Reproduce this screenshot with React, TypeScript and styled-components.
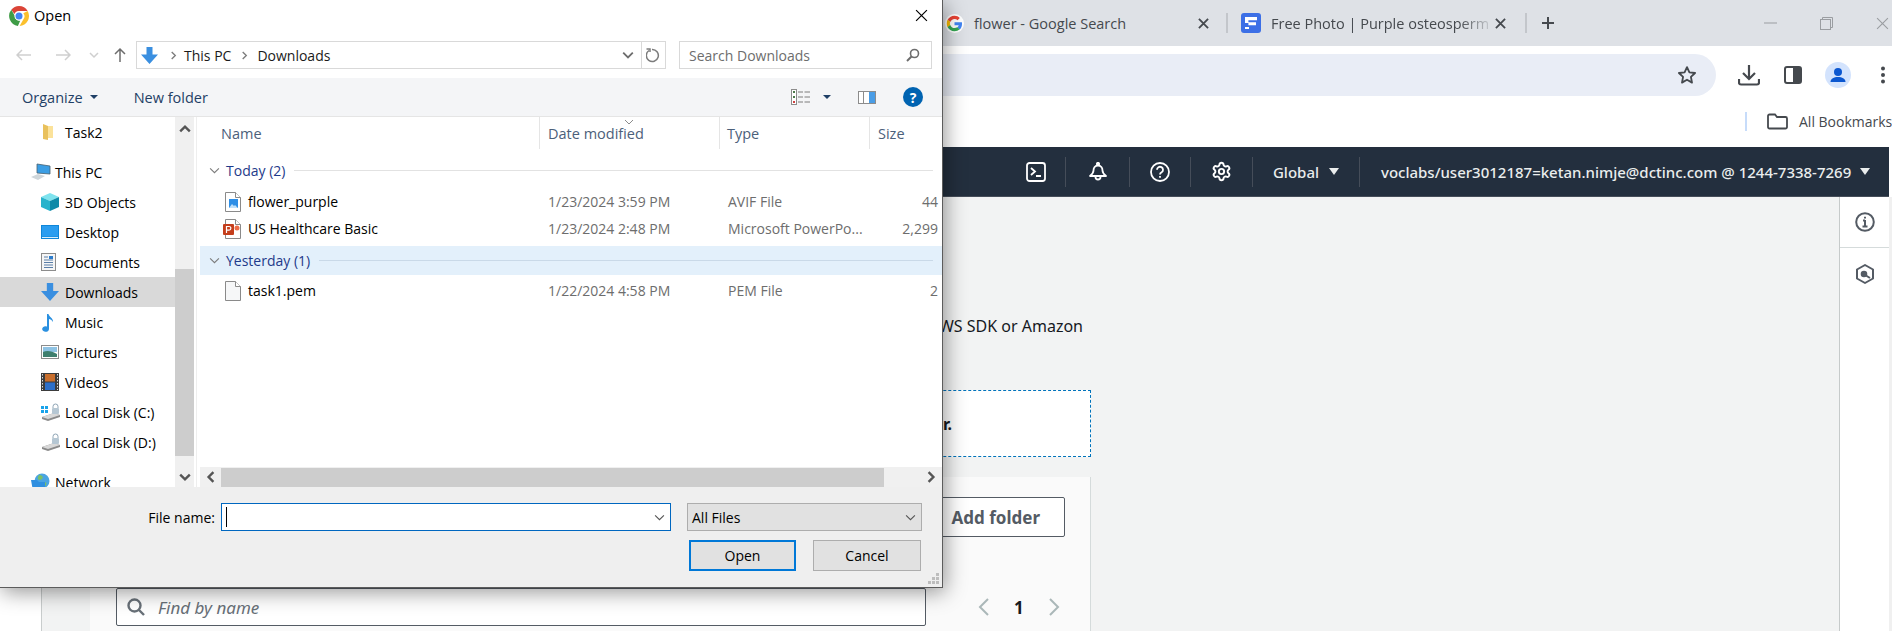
import React from 'react'
import styled, { createGlobalStyle } from 'styled-components'
import { Settings } from 'lucide-react'

const GlobalStyle = createGlobalStyle`
  html, body { margin: 0; padding: 0; background: #fff; }
  * { box-sizing: border-box; }
`

const WIN_FONT = `"Open Sans", "Noto Sans", sans-serif`
const AWS_FONT = `"Noto Sans", "Open Sans", sans-serif`

const Screen = styled.div`
  position: relative;
  width: 1892px;
  height: 631px;
  overflow: hidden;
  font-family: ${WIN_FONT};
`

/* ---------- browser behind the dialog ---------- */

const Browser = styled.div`
  display: flex;
  flex-direction: column;
  height: 100%;
`

const TabStrip = styled.div`
  display: flex;
  align-items: center;
  height: 46px;
  padding-left: 945px;
  background: #dee1e6;
  color: #45494e;
`

const Tab = styled.div<{ $w: number; $pl: number; $pr: number }>`
  display: flex;
  align-items: center;
  width: ${(p) => p.$w}px;
  padding: 0 ${(p) => p.$pr}px 0 ${(p) => p.$pl}px;
`

const TabTitle = styled.span<{ $fade?: boolean }>`
  flex: 1;
  margin-left: 10px;
  font-size: 14.5px;
  white-space: nowrap;
  ${(p) => p.$fade && `mask-image: linear-gradient(to right, #000 84%, transparent 100%);`}
`

const TabDivider = styled.span`
  width: 2px;
  height: 20px;
  background: #c3c6cb;
`

const NewTab = styled.span`
  display: flex;
  margin-left: 14px;
`

const WinControls = styled.div`
  display: flex;
  align-items: center;
  margin-left: auto;
  padding-right: 3px;
  gap: 43px;
`

const Toolbar = styled.div`
  display: flex;
  height: 50px;
  padding-top: 8px;
  background: #fff;
`

const Omnibox = styled.div`
  flex: 1;
  display: flex;
  align-items: center;
  justify-content: flex-end;
  padding-right: 19px;
  background: #e9edf6;
  border-radius: 0 21px 21px 0;
`

const ToolActions = styled.div`
  display: flex;
  align-items: center;
  width: 176px;
`

const ToolAction = styled.span<{ $ml: number }>`
  display: flex;
  margin-left: ${(p) => p.$ml}px;
`

const BookmarkBar = styled.div`
  display: flex;
  align-items: center;
  justify-content: flex-end;
  height: 51px;
  background: #fff;
  color: #45494e;
  font-size: 14px;
  white-space: nowrap;
`

const BookmarkSep = styled.span`
  width: 2px;
  height: 19px;
  margin-right: 20px;
  background: #c7dcfa;
`

const BookmarkLabel = styled.span`
  width: 93px;
  margin-left: 11px;
`

const AwsNav = styled.div`
  display: flex;
  align-items: center;
  justify-content: flex-end;
  height: 50px;
  margin-right: 3px;
  background: #232f3e;
  border-bottom: 1px solid #454d59;
  color: #eaeded;
  font-family: ${AWS_FONT};
  font-size: 15px;
  font-weight: 500;
`

const NavCell = styled.div<{ $w: number; $last?: boolean }>`
  display: flex;
  align-items: center;
  justify-content: ${(p) => (p.$last ? 'flex-start' : 'center')};
  gap: 8px;
  width: ${(p) => p.$w}px;
  height: 30px;
  padding-left: ${(p) => (p.$last ? 21 : 0)}px;
  white-space: nowrap;
  border-right: ${(p) => (p.$last ? 'none' : '1px solid #454d59')};
`

const Caret = styled.span<{ $ml?: number }>`
  width: 0;
  height: 0;
  margin-left: ${(p) => p.$ml ?? 0}px;
  border-left: 5px solid transparent;
  border-right: 5px solid transparent;
  border-top: 7px solid #eaeded;
`

const PageBody = styled.div`
  flex: 1;
  display: flex;
  min-height: 0;
  background: #f2f3f3;
  font-family: ${AWS_FONT};
`

const LeftRail = styled.div`
  width: 42px;
  background: #fff;
  border-right: 1px solid #c9cdcd;
`

const Content = styled.div`
  flex: 1;
  min-width: 0;
  padding: 117px 0 0 48px;
`

const Lead = styled.p`
  width: 993px;
  margin: 0 0 52px;
  font-size: 16px;
  line-height: 24px;
  color: #16191f;
  text-align: right;
  white-space: nowrap;
`

const DropZone = styled.div`
  display: flex;
  align-items: center;
  justify-content: flex-end;
  width: 1001px;
  height: 67px;
  padding-right: 138px;
  background: #fff;
  border: 1px dashed #0073bb;
  font-size: 16px;
  font-weight: 700;
  color: #16191f;
  white-space: nowrap;
`

const Card = styled.div`
  width: 1001px;
  height: 200px;
  margin-top: 20px;
  padding: 20px 25px 0 26px;
  background: #fafafa;
  border-right: 1px solid #d5dbdb;
`

const CardActions = styled.div`
  display: flex;
  justify-content: flex-end;
`

const OutlineButton = styled.button`
  width: 142px;
  height: 40px;
  padding: 0 24px 0 0;
  text-align: right;
  background: #fff;
  border: 1px solid #545b64;
  border-radius: 2px;
  font-family: ${AWS_FONT};
  font-size: 17px;
  font-weight: 700;
  color: #545b64;
`

const FindRow = styled.div`
  display: flex;
  align-items: center;
  margin-top: 51px;
`

const FindInput = styled.div`
  display: flex;
  align-items: center;
  gap: 13px;
  width: 810px;
  height: 38px;
  padding-left: 10px;
  background: #fff;
  border: 1px solid #545b64;
  border-radius: 2px;
  color: #687078;
  font-size: 17px;
  font-style: italic;
`

const Pager = styled.div`
  display: flex;
  align-items: center;
  margin-left: 51px;
  gap: 24px;
  font-size: 17px;
  font-weight: 700;
  color: #16191f;
`

const SidePanel = styled.div`
  width: 53px;
  background: #fff;
  border-left: 1px solid #c6caca;
  border-right: 3px solid #f0f0f0;
`

const SideItem = styled.div<{ $h: number }>`
  display: flex;
  align-items: center;
  justify-content: center;
  height: ${(p) => p.$h}px;
  border-bottom: 1px solid #d5dbdb;
  &:last-child { border-bottom: none; }
`

/* ---------- file dialog ---------- */

const Dialog = styled.div`
  position: absolute;
  left: 0;
  top: 0;
  display: flex;
  flex-direction: column;
  width: 943px;
  height: 588px;
  background: #fff;
  border-right: 1px solid #5c5c5c;
  border-bottom: 1px solid #5c5c5c;
  box-shadow: 2px 4px 20px rgba(0, 0, 0, 0.42);
  color: #000;
  font-size: 14px;
`

const TitleBar = styled.div`
  display: flex;
  align-items: center;
  gap: 5px;
  height: 31px;
  padding: 0 14px 0 9px;
  font-size: 14.5px;
`

const CloseBtn = styled.span`
  display: flex;
  margin-left: auto;
`

const AddressRow = styled.div`
  display: flex;
  align-items: center;
  height: 28px;
  margin-top: 10px;
  padding-left: 14px;
`

const NavBtn = styled.span<{ $ml: number }>`
  display: flex;
  margin-left: ${(p) => p.$ml}px;
`

const BoxField = styled.div<{ $w: number; $ml: number }>`
  display: flex;
  align-items: center;
  width: ${(p) => p.$w}px;
  height: 28px;
  margin-left: ${(p) => p.$ml}px;
  border: 1px solid #d9d9d9;
`

const Crumb = styled.span<{ $ml?: number }>`
  display: flex;
  margin-left: ${(p) => p.$ml ?? 0}px;
  color: #1a1a1a;
  white-space: nowrap;
`

const CrumbSpacer = styled.span`
  flex: 1;
`

const RefreshBox = styled.span`
  display: flex;
  align-items: center;
  justify-content: center;
  width: 24px;
  height: 100%;
  margin-left: 7px;
  border-left: 1px solid #d9d9d9;
`

const SearchPlaceholder = styled.span`
  flex: 1;
  padding-left: 9px;
  color: #6d6d6d;
  white-space: nowrap;
`

const CommandBar = styled.div`
  display: flex;
  align-items: center;
  height: 39px;
  margin-top: 9px;
  padding: 0 19px 0 22px;
  background: #f4f5f7;
  border-bottom: 1px solid #e5e5e5;
  color: #1f3f66;
  font-size: 14.5px;
`

const CommandBtn = styled.span<{ $ml?: number }>`
  display: flex;
  align-items: center;
  margin-left: ${(p) => p.$ml ?? 0}px;
`

const SmallCaret = styled.span<{ $ml: number }>`
  width: 0;
  height: 0;
  margin-left: ${(p) => p.$ml}px;
  border-left: 4px solid transparent;
  border-right: 4px solid transparent;
  border-top: 4px solid #1f3f66;
`

const CommandRight = styled.div`
  display: flex;
  align-items: center;
  margin-left: auto;
`

const HelpDot = styled.span`
  display: flex;
  align-items: center;
  justify-content: center;
  width: 20px;
  height: 20px;
  margin-left: 27px;
  border-radius: 50%;
  background: #0063b1;
  color: #fff;
  font-size: 14px;
  font-weight: 700;
`

const Explorer = styled.div`
  flex: 1;
  display: flex;
  min-height: 0;
`

const NavPane = styled.div`
  width: 175px;
  overflow: hidden;
`

const NavRow = styled.div<{ $indent: number; $active?: boolean; $mt?: number }>`
  display: flex;
  align-items: center;
  height: 30px;
  margin-top: ${(p) => p.$mt ?? 0}px;
  padding-left: ${(p) => p.$indent}px;
  background: ${(p) => (p.$active ? '#d9d9d9' : 'transparent')};
  white-space: nowrap;
`

const NavIcon = styled.span`
  display: flex;
  align-items: center;
  width: 24px;
`

const VScroll = styled.div`
  display: flex;
  flex-direction: column;
  width: 19px;
  background: #f0f0f0;
`

const ScrollArrow = styled.span<{ $h: number }>`
  display: flex;
  align-items: center;
  justify-content: center;
  flex: none;
  height: ${(p) => p.$h}px;
`

const VThumb = styled.div`
  height: 187px;
  margin-top: auto;
  margin-bottom: 11px;
  background: #cdcdcd;
`

const PaneGap = styled.div`
  width: 6px;
  padding-left: 2px;
  &::before {
    content: '';
    display: block;
    width: 1px;
    height: 100%;
    background: #eeeeee;
  }
`

const FilePane = styled.div`
  flex: 1;
  display: flex;
  flex-direction: column;
  min-width: 0;
`

const COLUMNS = '340px 180px 150px 72px'

const HeaderRow = styled.div`
  position: relative;
  display: grid;
  grid-template-columns: ${COLUMNS};
  height: 32px;
  color: #4c607a;
  font-size: 14.5px;
`

const HeaderCell = styled.div<{ $pl: number; $line?: boolean }>`
  display: flex;
  align-items: center;
  padding-left: ${(p) => p.$pl}px;
  border-right: ${(p) => (p.$line ? '1px solid #e5e5e5' : 'none')};
`

const SortMark = styled.span`
  position: absolute;
  left: 424px;
  top: 0;
  display: flex;
`

const GroupRow = styled.div<{ $selected?: boolean }>`
  display: flex;
  align-items: center;
  height: 29px;
  padding: 0 9px;
  background: ${(p) => (p.$selected ? '#e3f0fb' : 'transparent')};
  color: #1e3a8a;
`

const GroupLabel = styled.span`
  margin-left: 6px;
  white-space: nowrap;
`

const GroupLine = styled.span<{ $selected?: boolean }>`
  flex: 1;
  height: 1px;
  margin-left: 9px;
  background: ${(p) => (p.$selected ? '#c9d9e8' : '#e2e2e2')};
`

const Rows = styled.div<{ $mt: number; $mb: number }>`
  margin: ${(p) => p.$mt}px 0 ${(p) => p.$mb}px;
`

const FileRow = styled.div`
  display: grid;
  grid-template-columns: ${COLUMNS};
  align-items: center;
  height: 27px;
  color: #6d6d6d;
  white-space: nowrap;
`

const NameCell = styled.div`
  display: flex;
  align-items: center;
  color: #000;
`

const FileIcon = styled.span`
  display: flex;
  justify-content: flex-end;
  width: 48px;
  padding-right: 5px;
`

const DateCell = styled.div`
  padding-left: 8px;
`

const TypeCell = styled.div`
  padding-left: 8px;
  overflow: hidden;
`

const SizeCell = styled.div`
  text-align: right;
  padding-right: 4px;
`

const ListArea = styled.div`
  flex: 1;
  min-height: 0;
  overflow: hidden;
  padding-top: 7px;
`

const HScroll = styled.div`
  display: flex;
  align-items: center;
  height: 20px;
  background: #f0f0f0;
`

const HArrow = styled.span<{ $w: number }>`
  display: flex;
  justify-content: center;
  width: ${(p) => p.$w}px;
`

const HThumb = styled.div`
  width: 663px;
  height: 19px;
  background: #cdcdcd;
`

const Footer = styled.div`
  position: relative;
  display: flex;
  flex-direction: column;
  height: 100px;
  padding: 16px 20px 0 0;
  background: #efefef;
`

const FormRow = styled.div<{ $mt?: number; $mr?: number }>`
  display: flex;
  align-items: center;
  justify-content: flex-end;
  margin-top: ${(p) => p.$mt ?? 0}px;
  margin-right: ${(p) => p.$mr ?? 0}px;
`

const FileLabel = styled.span`
  margin-right: 6px;
`

const NameInput = styled.div`
  display: flex;
  align-items: center;
  justify-content: space-between;
  width: 450px;
  height: 28px;
  padding: 0 5px 0 4px;
  background: #fff;
  border: 1px solid #0067c0;
`

const TextCaret = styled.span`
  width: 1px;
  height: 20px;
  background: #000;
`

const TypeSelect = styled.div`
  display: flex;
  align-items: center;
  justify-content: space-between;
  width: 235px;
  height: 28px;
  margin-left: 16px;
  padding: 0 5px 0 4px;
  background: #e1e1e1;
  border: 1px solid #adadad;
`

const DialogButton = styled.button<{ $primary?: boolean; $w: number }>`
  width: ${(p) => p.$w}px;
  height: 31px;
  margin-left: 17px;
  padding: 0;
  background: #e1e1e1;
  border: ${(p) => (p.$primary ? '2px solid #0078d7' : '1px solid #adadad')};
  font-family: ${WIN_FONT};
  font-size: 14px;
  color: #000;
`

const Grip = styled.span`
  position: absolute;
  right: 2px;
  bottom: 2px;
  display: flex;
`

/* ---------- drawings ---------- */

const ChromeLogo = () => (
  <svg width="20" height="20" viewBox="0 0 20 20">
    <path d="M10 0a10 10 0 0 1 8.66 5H10a5 5 0 0 0-4.6 3L2.3 3.8A10 10 0 0 1 10 0z" fill="#db4437" />
    <path d="M18.66 5A10 10 0 0 1 10.6 20l3.7-6.5A5 5 0 0 0 14.3 7.2z" fill="#fbc02d" />
    <path d="M2.3 3.8 5.6 9.4a5 5 0 0 0 5.6 5.4L8.9 19.9A10 10 0 0 1 2.3 3.8z" fill="#3f9c46" />
    <circle cx="10" cy="10" r="4.4" fill="#fff" />
    <circle cx="10" cy="10" r="3.5" fill="#4285f4" />
  </svg>
)

const GoogleLogo = () => (
  <svg width="19" height="19" viewBox="0 0 48 48">
    <circle cx="24" cy="24" r="24" fill="#fff" />
    <path fill="#ea4335" d="M24 12.5c3 0 5.6 1 7.7 3l5.7-5.7C33.9 6.5 29.4 4.5 24 4.5c-7.7 0-14.3 4.4-17.5 10.8l6.7 5.2C14.8 15.8 19 12.5 24 12.5z" />
    <path fill="#4285f4" d="M43 24.5c0-1.3-.1-2.6-.3-3.9H24v7.700h10.700c-.5 2.500-1.900 4.600-4 6l6.500 5C41 35.800 43 30.600 43 24.500z" />
    <path fill="#fbbc05" d="M13.200 28.500c-.5-1.400-.8-2.900-.8-4.500s.3-3.100.8-4.500l-6.700-5.200C5.200 17.300 4.500 20.500 4.500 24s.7 6.700 2 9.700z" />
    <path fill="#34a853" d="M24 43.500c5.300 0 9.700-1.700 13.200-4.800l-6.500-5c-1.800 1.200-4.100 1.900-6.700 1.900-5 0-9.200-3.300-10.800-7.900l-6.700 5.200C9.700 39.100 16.300 43.500 24 43.500z" />
  </svg>
)

const FreepikLogo = () => (
  <svg width="20" height="20" viewBox="0 0 20 20">
    <rect width="20" height="20" rx="3" fill="#3c6fe6" />
    <path d="M4 4h12v3.200H7.400v2H15v3H7.400V10H4zM4 14h4v2H4z" fill="#fff" />
  </svg>
)

const Cross = ({ size = 12, color = '#45494e', width = 2 }: { size?: number; color?: string; width?: number }) => (
  <svg width={size} height={size} viewBox="0 0 12 12">
    <path d="M1 1l10 10M11 1 1 11" stroke={color} strokeWidth={width} fill="none" />
  </svg>
)

const Chevron = ({ dir, size = 10, color = '#555', width = 1.5 }: { dir: 'up' | 'down' | 'left' | 'right'; size?: number; color?: string; width?: number }) => {
  const d = {
    up: 'M1 7l4-4 4 4',
    down: 'M1 3l4 4 4-4',
    left: 'M7 1 3 5l4 4',
    right: 'M3 1l4 4-4 4',
  }[dir]
  return (
    <svg width={size} height={size} viewBox="0 0 10 10">
      <path d={d} stroke={color} strokeWidth={width} fill="none" />
    </svg>
  )
}

const Arrow = ({ dir, color }: { dir: 'left' | 'right' | 'up'; color: string }) => {
  if (dir === 'up') {
    return (
      <svg width="12" height="16" viewBox="0 0 12 16">
        <path d="M6 15V2M1 7l5-5 5 5" stroke={color} strokeWidth="1.5" fill="none" />
      </svg>
    )
  }
  const d = dir === 'left' ? 'M15 6H1M6 1 1 6l5 5' : 'M1 6h14M10 1l5 5-5 5'
  return (
    <svg width="16" height="12" viewBox="0 0 16 12">
      <path d={d} stroke={color} strokeWidth="1.5" fill="none" />
    </svg>
  )
}

const BlueDown = ({ size = 17 }: { size?: number }) => (
  <svg width={size} height={size} viewBox="0 0 17 17">
    <path d="M5.5 0h6v7.500H17L8.500 17 0 7.500h5.500z" fill="#3a8fe0" />
  </svg>
)

const FolderYellow = () => (
  <svg width="18" height="18" viewBox="0 0 18 18">
    <path d="M2 1 7 3v14l-5-1z" fill="#e9c15c" />
    <path d="M7 3h5v12H7z" fill="#fbe29a" />
  </svg>
)

const Monitor = () => (
  <svg width="20" height="18" viewBox="0 0 20 18">
    <path d="M6 1l13 2v8L6 10z" fill="#3c9ee4" stroke="#46606f" strokeWidth=".8" />
    <path d="M0 14l7-3 7 2-7 4z" fill="#cfd6da" />
  </svg>
)

const Cube = () => (
  <svg width="18" height="18" viewBox="0 0 18 18">
    <path d="M9 0l9 4-9 4-9-4z" fill="#7fe3ee" />
    <path d="M0 4l9 4v10l-9-4z" fill="#27b3cc" />
    <path d="M18 4 9 8v10l9-4z" fill="#0f8aa8" />
  </svg>
)

const DesktopIcon = () => (
  <svg width="18" height="14" viewBox="0 0 18 14">
    <rect width="18" height="14" fill="#0f86d8" />
    <rect x="1" y="1" width="16" height="10.5" fill="#2a9df0" />
    <rect x="1" y="12" width="16" height="1" fill="#d6ecfb" />
  </svg>
)

const DocIcon = () => (
  <svg width="15" height="18" viewBox="0 0 15 18">
    <rect x=".5" y=".5" width="14" height="17" fill="#f6f6f6" stroke="#8c8c8c" />
    <path d="M3 4h4M3 7h9M3 9.500h9M3 12h9M3 14.500h9" stroke="#5a7ea8" />
    <rect x="8" y="3" width="4" height="3" fill="#2b7ccc" />
  </svg>
)

const MusicIcon = () => (
  <svg width="14" height="19" viewBox="0 0 14 19">
    <path d="M6 1h1.500c.5 3 5 4 4.500 8-1-2-3-3-4-3v10a3.400 2.800 0 1 1-2-2.500z" fill="#2a90e0" />
  </svg>
)

const PictureIcon = () => (
  <svg width="18" height="14" viewBox="0 0 18 14">
    <rect x=".5" y=".5" width="17" height="13" fill="#fff" stroke="#8c8c8c" />
    <rect x="2" y="2" width="14" height="5" fill="#8fc3e4" />
    <path d="M2 7c4-2 9-1 14 2v3H2z" fill="#3f7f6e" />
  </svg>
)

const FilmIcon = () => (
  <svg width="18" height="18" viewBox="0 0 18 18">
    <rect width="18" height="18" fill="#3c3c3c" />
    <rect x="4" y="1" width="10" height="7.5" fill="#c96f2d" />
    <rect x="4" y="9.5" width="10" height="7.5" fill="#2d6fc9" />
    <path d="M1.500 1v16M16.500 1v16" stroke="#ddd" strokeDasharray="1.5 1.5" />
  </svg>
)

const DiskIcon = ({ windows }: { windows?: boolean }) => (
  <svg width="20" height="18" viewBox="0 0 20 18">
    <path d="M1 14l12-4 6 2v2L7 18l-6-2z" fill="#8a8a8a" />
    <path d="M1 14l12-4 6 2-12 4z" fill="#d8d8d8" />
    <path d="M12 5V3.500a2.500 2.500 0 0 1 5 0V5" stroke="#8fa5b5" fill="none" />
    <rect x="11" y="5" width="7" height="6" rx="1" fill="#b6c7d3" />
    {windows && <path d="M0 3h3v3H0zM4 3h3v3H4zM0 7h3v3H0zM4 7h3v3H4z" fill="#19a3ea" />}
  </svg>
)

const GlobeIcon = () => (
  <svg width="19" height="18" viewBox="0 0 19 18">
    <circle cx="11" cy="8" r="7.5" fill="#4aa4e2" />
    <path d="M8 2c3 0 5 2 3 4S6 7 7 4zM13 9c2 0 3 1 2 3s-4 2-3 0z" fill="#7ac068" />
    <path d="M0 7h6l2 2h6v9H2z" fill="#2f8fe0" />
  </svg>
)

const PageOutline = ({ children, fill = '#fff' }: { children?: React.ReactNode; fill?: string }) => (
  <svg width="20" height="20" viewBox="0 0 20 20">
    <path d="M2.500 .5h10l5 5v14h-15z" fill={fill} stroke="#8a8a8a" />
    <path d="M12.500 .5v5h5" fill="#fff" stroke="#8a8a8a" />
    {children}
  </svg>
)

const ViewsIcon = () => (
  <svg width="19" height="16" viewBox="0 0 19 16">
    <rect x=".5" y=".5" width="5" height="15" fill="#fff" stroke="#8c8c8c" />
    <rect x="2" y="2" width="2" height="2" fill="#4a7a4a" />
    <rect x="2" y="7" width="2" height="2" fill="#4a7a4a" />
    <rect x="2" y="12" width="2" height="2" fill="#d04040" />
    <path d="M7 3h5M13.500 3H19M7 8h5M13.500 8H19M7 13h5M13.500 13H19" stroke="#7c7c7c" />
  </svg>
)

const PaneIcon = () => (
  <svg width="18" height="13" viewBox="0 0 18 13">
    <rect x=".5" y=".5" width="17" height="12" fill="#fff" stroke="#8c8c8c" />
    <rect x="5" y="1" width="1" height="11" fill="#8c8c8c" />
    <rect x="11" y="1" width="6" height="11" fill="#4a9de6" />
  </svg>
)

const Magnifier = ({ color = '#6d6d6d', size = 14, width = 1.6 }: { color?: string; size?: number; width?: number }) => (
  <svg width={size} height={size} viewBox="0 0 14 14">
    <circle cx="8.5" cy="5.5" r="4" fill="none" stroke={color} strokeWidth={width} />
    <path d="M5.500 8.500 1 13" stroke={color} strokeWidth={width + 0.4} />
  </svg>
)

const TerminalIcon = () => (
  <svg width="20" height="20" viewBox="0 0 20 20" fill="none" stroke="#fff" strokeWidth="1.8">
    <rect x="1" y="1" width="18" height="18" rx="2.5" />
    <path d="M5 6l4 3.500L5 13M10 14h5" />
  </svg>
)

const BellIcon = () => (
  <svg width="20" height="20" viewBox="0 0 20 20" fill="none" stroke="#fff" strokeWidth="1.8">
    <circle cx="10" cy="2" r="1.2" fill="#fff" />
    <path d="M10 3.500c-3 0-4.500 2.500-4.500 5 0 2-1 3.500-3.500 5.500h16c-2.500-2-3.500-3.500-3.500-5.500 0-2.500-1.500-5-4.500-5z" strokeLinejoin="round" />
    <path d="M7.500 15a2.500 2.500 0 0 0 5 0" />
  </svg>
)

const HelpIcon = () => (
  <svg width="20" height="20" viewBox="0 0 20 20" fill="none" stroke="#fff" strokeWidth="1.8">
    <circle cx="10" cy="10" r="9" />
    <path d="M7 7.800a3 3 0 1 1 4.600 2.500c-1 .6-1.600 1.100-1.600 2.200" />
    <path d="M10 14v1.800" />
  </svg>
)

const InfoIcon = () => (
  <svg width="20" height="20" viewBox="0 0 20 20" fill="none" stroke="#545b64" strokeWidth="2">
    <circle cx="10" cy="10" r="8.8" />
    <path d="M10 8v6M7.500 14.500h5M8 8.500h2" />
    <path d="M10 4.800v1.700" />
  </svg>
)

const HexSearchIcon = () => (
  <svg width="18" height="20" viewBox="0 0 18 20" fill="none" stroke="#545b64" strokeWidth="2">
    <path d="M9 1l8 4.500v9L9 19l-8-4.500v-9z" strokeLinejoin="round" />
    <circle cx="8" cy="10" r="2.3" fill="#545b64" />
    <path d="M10 11.500l4 2.500" />
  </svg>
)

const PagerChevron = ({ dir }: { dir: 'left' | 'right' }) => (
  <svg width="13" height="20" viewBox="0 0 13 20" fill="none" stroke="#aab7b8" strokeWidth="2">
    <path d={dir === 'left' ? 'M11 2 3 10l8 8' : 'M2 2l8 8-8 8'} />
  </svg>
)

const NAV_ITEMS = [
  { label: 'Desktop', icon: <DesktopIcon /> },
  { label: 'Documents', icon: <DocIcon /> },
  { label: 'Downloads', icon: <BlueDown size={18} />, active: true },
  { label: 'Music', icon: <MusicIcon /> },
  { label: 'Pictures', icon: <PictureIcon /> },
  { label: 'Videos', icon: <FilmIcon /> },
  { label: 'Local Disk (C:)', icon: <DiskIcon windows /> },
  { label: 'Local Disk (D:)', icon: <DiskIcon /> },
]

const App = () => {
  return (
    <Screen>
      <GlobalStyle />
      <Browser>
        <TabStrip>
          <Tab $w={281} $pl={0} $pr={17}>
            <GoogleLogo />
            <TabTitle>flower - Google Search</TabTitle>
            <Cross size={11} />
          </Tab>
          <TabDivider />
          <Tab $w={297} $pl={13} $pr={19}>
            <FreepikLogo />
            <TabTitle $fade>Free Photo | Purple osteosperm</TabTitle>
            <Cross size={11} />
          </Tab>
          <TabDivider />
          <NewTab>
            <svg width="14" height="14" viewBox="0 0 14 14">
              <path d="M7 1v12M1 7h12" stroke="#45494e" strokeWidth="2" />
            </svg>
          </NewTab>
          <WinControls>
            <svg width="13" height="2" viewBox="0 0 13 2">
              <path d="M0 1h13" stroke="#9a9da1" />
            </svg>
            <svg width="13" height="13" viewBox="0 0 13 13" fill="none" stroke="#9a9da1">
              <rect x=".5" y="2.5" width="10" height="10" />
              <path d="M2.500 2.500V.5h10v10h-2" />
            </svg>
            <Cross size={13} color="#9a9da1" width={1} />
          </WinControls>
        </TabStrip>

        <Toolbar>
          <Omnibox>
            <svg width="20" height="20" viewBox="0 0 24 24" fill="none" stroke="#45494e" strokeWidth="2.2" strokeLinejoin="round">
              <path d="M12 2.500l2.900 6.300 6.800.8-5 4.700 1.300 6.800-6-3.400-6 3.400 1.300-6.800-5-4.700 6.800-.8z" />
            </svg>
          </Omnibox>
          <ToolActions>
            <ToolAction $ml={22}>
              <svg width="22" height="22" viewBox="0 0 22 22" fill="none" stroke="#45494e" strokeWidth="2.2">
                <path d="M11 1v13M5 9l6 6 6-6" />
                <path d="M1 15v3.500a2 2 0 0 0 2 2h16a2 2 0 0 0 2-2V15" />
              </svg>
            </ToolAction>
            <ToolAction $ml={24}>
              <svg width="18" height="18" viewBox="0 0 18 18">
                <rect x="1" y="1" width="16" height="16" rx="2" fill="#fff" stroke="#45494e" strokeWidth="2" />
                <rect x="9" y="1" width="8" height="16" fill="#45494e" />
              </svg>
            </ToolAction>
            <ToolAction $ml={23}>
              <svg width="26" height="26" viewBox="0 0 26 26">
                <circle cx="13" cy="13" r="13" fill="#d3e3fd" />
                <circle cx="13" cy="10" r="4" fill="#0b57d0" />
                <path d="M5.500 20c0-3.500 3.500-5 7.500-5s7.500 1.500 7.500 5z" fill="#0b57d0" />
              </svg>
            </ToolAction>
            <ToolAction $ml={30}>
              <svg width="4" height="18" viewBox="0 0 4 18" fill="#45494e">
                <circle cx="2" cy="2.5" r="2" />
                <circle cx="2" cy="9" r="2" />
                <circle cx="2" cy="15.5" r="2" />
              </svg>
            </ToolAction>
          </ToolActions>
        </Toolbar>

        <BookmarkBar>
          <BookmarkSep />
          <svg width="21" height="17" viewBox="0 0 21 17" fill="none" stroke="#45494e" strokeWidth="1.8">
            <path d="M1 3a1.500 1.500 0 0 1 1.500-1.500h5.500l2 2.500h8.500A1.500 1.500 0 0 1 20 5.500V14a1.500 1.500 0 0 1-1.500 1.500h-16A1.500 1.500 0 0 1 1 14z" />
          </svg>
          <BookmarkLabel>All Bookmarks</BookmarkLabel>
        </BookmarkBar>

        <AwsNav>
          <NavCell $w={60}><TerminalIcon /></NavCell>
          <NavCell $w={64}><BellIcon /></NavCell>
          <NavCell $w={61}><HelpIcon /></NavCell>
          <NavCell $w={62}><Settings size={21} color="#fff" strokeWidth={2.2} /></NavCell>
          <NavCell $w={107}>Global<Caret $ml={2} /></NavCell>
          <NavCell $w={529} $last>
            voclabs/user3012187=ketan.nimje@dctinc.com @ 1244-7338-7269
            <Caret $ml={1} />
          </NavCell>
        </AwsNav>

        <PageBody>
          <LeftRail />
          <Content>
            <Lead>To upload files larger than 160 GB, use the AWS CLI, AWS SDK or Amazon</Lead>
            <DropZone>Drag and drop files and folders you want to upload here, or choose Add files or Add folder.</DropZone>
            <Card>
              <CardActions>
                <OutlineButton>Add folder</OutlineButton>
              </CardActions>
              <FindRow>
                <FindInput>
                  <svg width="18" height="18" viewBox="0 0 18 18" fill="none" stroke="#687078" strokeWidth="2.4">
                    <circle cx="7.5" cy="7.5" r="6" />
                    <path d="M12 12l5 5" />
                  </svg>
                  Find by name
                </FindInput>
                <Pager>
                  <PagerChevron dir="left" />
                  1
                  <PagerChevron dir="right" />
                </Pager>
              </FindRow>
            </Card>
          </Content>
          <SidePanel>
            <SideItem $h={51}><InfoIcon /></SideItem>
            <SideItem $h={51}><HexSearchIcon /></SideItem>
          </SidePanel>
        </PageBody>
      </Browser>

      <Dialog>
        <TitleBar>
          <ChromeLogo />
          Open
          <CloseBtn><Cross size={13} color="#000" width={1.1} /></CloseBtn>
        </TitleBar>

        <AddressRow>
          <NavBtn $ml={2}><Arrow dir="left" color="#cfcfcf" /></NavBtn>
          <NavBtn $ml={23}><Arrow dir="right" color="#cfcfcf" /></NavBtn>
          <NavBtn $ml={18}><Chevron dir="down" color="#cfcfcf" /></NavBtn>
          <NavBtn $ml={15}><Arrow dir="up" color="#6d6d6d" /></NavBtn>
          <BoxField $w={530} $ml={10}>
            <Crumb $ml={4}><BlueDown /></Crumb>
            <Crumb $ml={11}><Chevron dir="right" size={9} color="#7c7c7c" /></Crumb>
            <Crumb $ml={6}>This PC</Crumb>
            <Crumb $ml={9}><Chevron dir="right" size={9} color="#7c7c7c" /></Crumb>
            <Crumb $ml={8}>Downloads</Crumb>
            <CrumbSpacer />
            <Crumb><Chevron dir="down" size={12} color="#6d6d6d" /></Crumb>
            <RefreshBox>
              <svg width="15" height="15" viewBox="0 0 15 15" fill="none" stroke="#7c7c7c" strokeWidth="1.5">
                <path d="M3 2.500a6 6 0 1 0 3-1" />
                <path d="M4 4V1H.5" />
              </svg>
            </RefreshBox>
          </BoxField>
          <BoxField $w={253} $ml={13}>
            <SearchPlaceholder>Search Downloads</SearchPlaceholder>
            <NavBtn $ml={0}><Magnifier /></NavBtn>
            <NavBtn $ml={11} />
          </BoxField>
        </AddressRow>

        <CommandBar>
          <CommandBtn>Organize<SmallCaret $ml={7} /></CommandBtn>
          <CommandBtn $ml={36}>New folder</CommandBtn>
          <CommandRight>
            <ViewsIcon />
            <SmallCaret $ml={13} />
            <CommandBtn $ml={27}><PaneIcon /></CommandBtn>
            <HelpDot>?</HelpDot>
          </CommandRight>
        </CommandBar>

        <Explorer>
          <NavPane>
            <NavRow $indent={41}><NavIcon><FolderYellow /></NavIcon>Task2</NavRow>
            <NavRow $indent={31} $mt={10}><NavIcon><Monitor /></NavIcon>This PC</NavRow>
            <NavRow $indent={41}><NavIcon><Cube /></NavIcon>3D Objects</NavRow>
            {NAV_ITEMS.map((item) => (
              <NavRow key={item.label} $indent={41} $active={item.active}>
                <NavIcon>{item.icon}</NavIcon>
                {item.label}
              </NavRow>
            ))}
            <NavRow $indent={31} $mt={10}><NavIcon><GlobeIcon /></NavIcon>Network</NavRow>
          </NavPane>
          <VScroll>
            <ScrollArrow $h={24}><Chevron dir="up" size={12} width={2} /></ScrollArrow>
            <VThumb />
            <ScrollArrow $h={20}><Chevron dir="down" size={12} width={2} /></ScrollArrow>
          </VScroll>
          <PaneGap />
          <FilePane>
            <HeaderRow>
              <SortMark><Chevron dir="down" size={10} color="#8c8c8c" width={1} /></SortMark>
              <HeaderCell $pl={21} $line>Name</HeaderCell>
              <HeaderCell $pl={8} $line>Date modified</HeaderCell>
              <HeaderCell $pl={7} $line>Type</HeaderCell>
              <HeaderCell $pl={8}>Size</HeaderCell>
            </HeaderRow>
            <ListArea>
              <GroupRow>
                <Chevron dir="down" size={11} color="#7c7c7c" width={1} />
                <GroupLabel>Today (2)</GroupLabel>
                <GroupLine />
              </GroupRow>
              <Rows $mt={3} $mb={4}>
                <FileRow>
                  <NameCell>
                    <FileIcon>
                      <PageOutline>
                        <rect x="6" y="7" width="9" height="9" fill="#2d8ee6" />
                        <path d="M6 16l3-4 2 2 1-1 3 3z" fill="#bfe0fa" />
                      </PageOutline>
                    </FileIcon>
                    flower_purple
                  </NameCell>
                  <DateCell>1/23/2024 3:59 PM</DateCell>
                  <TypeCell>AVIF File</TypeCell>
                  <SizeCell>44</SizeCell>
                </FileRow>
                <FileRow>
                  <NameCell>
                    <FileIcon>
                      <PageOutline>
                        <rect x="0" y="5" width="11" height="11" rx="1" fill="#c43e1c" />
                        <path d="M3.500 14V7.500h2.500a1.800 1.800 0 0 1 0 3.700H4" stroke="#fff" fill="none" strokeWidth="1.2" />
                        <circle cx="14" cy="9" r="2.5" fill="#ed6c47" />
                      </PageOutline>
                    </FileIcon>
                    US Healthcare Basic
                  </NameCell>
                  <DateCell>1/23/2024 2:48 PM</DateCell>
                  <TypeCell>Microsoft PowerPo...</TypeCell>
                  <SizeCell>2,299</SizeCell>
                </FileRow>
              </Rows>
              <GroupRow $selected>
                <Chevron dir="down" size={11} color="#7c7c7c" width={1} />
                <GroupLabel>Yesterday (1)</GroupLabel>
                <GroupLine $selected />
              </GroupRow>
              <Rows $mt={2} $mb={0}>
                <FileRow>
                  <NameCell>
                    <FileIcon><PageOutline fill="#f6f7f8" /></FileIcon>
                    task1.pem
                  </NameCell>
                  <DateCell>1/22/2024 4:58 PM</DateCell>
                  <TypeCell>PEM File</TypeCell>
                  <SizeCell>2</SizeCell>
                </FileRow>
              </Rows>
            </ListArea>
            <HScroll>
              <HArrow $w={21}><Chevron dir="left" size={12} width={2} /></HArrow>
              <HThumb />
              <HArrow $w={41} />
              <Chevron dir="right" size={12} width={2} />
            </HScroll>
          </FilePane>
        </Explorer>

        <Footer>
          <FormRow>
            <FileLabel>File name:</FileLabel>
            <NameInput>
              <TextCaret />
              <Chevron dir="down" size={11} color="#555" width={1} />
            </NameInput>
            <TypeSelect>
              All Files
              <Chevron dir="down" size={11} color="#555" width={1} />
            </TypeSelect>
          </FormRow>
          <FormRow $mt={9} $mr={1}>
            <DialogButton $primary $w={107}>Open</DialogButton>
            <DialogButton $w={108}>Cancel</DialogButton>
          </FormRow>
          <Grip>
            <svg width="12" height="12" viewBox="0 0 12 12" fill="#bdbdbd">
              <rect x="8" y="0" width="3" height="3" />
              <rect x="4" y="4" width="3" height="3" />
              <rect x="8" y="4" width="3" height="3" />
              <rect x="0" y="8" width="3" height="3" />
              <rect x="4" y="8" width="3" height="3" />
              <rect x="8" y="8" width="3" height="3" />
            </svg>
          </Grip>
        </Footer>
      </Dialog>
    </Screen>
  )
}

export default App
